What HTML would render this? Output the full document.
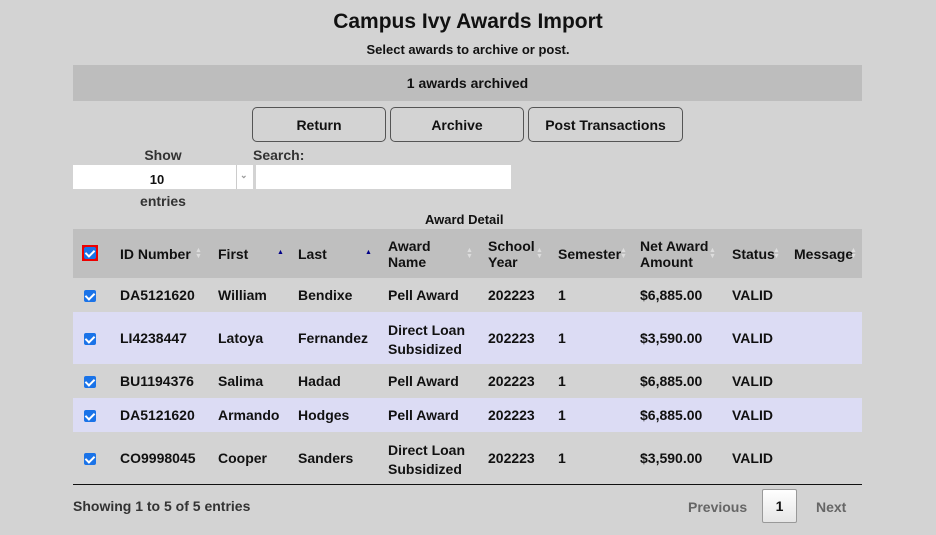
<!DOCTYPE html>
<html><head><style>
body{margin:0;width:936px;height:535px;background:#d3d3d3;font-family:"Liberation Sans",sans-serif;font-weight:bold;color:#111;position:relative;overflow:hidden}
.a{position:absolute;white-space:nowrap}
.btn{position:absolute;top:107px;height:35px;border:1px solid #555;border-radius:5px;background:#d3d3d3;font-size:14px;display:flex;align-items:center;justify-content:center;box-sizing:border-box}
.row{position:absolute;left:73px;width:789px}
.t{font-size:14px}
.cb{position:absolute;left:84px;width:12px;height:12px;background:#1a73e8;border-radius:2px}
.cb:after{content:"";position:absolute;left:3px;top:1px;width:4px;height:7px;border:solid #fff;border-width:0 2px 2px 0;transform:rotate(45deg)}
.s{position:absolute;font-size:7px;color:#ddd;line-height:6px}
</style></head><body>
<div class="a" style="left:0;width:936px;text-align:center;top:10px;font-size:21px">Campus Ivy Awards Import</div>
<div class="a" style="left:0;width:936px;text-align:center;top:42px;font-size:13px">Select awards to archive or post.</div>
<div class="a" style="left:73px;width:789px;top:65px;height:36px;background:#bdbdbd;text-align:center;line-height:36px;font-size:14px">1 awards archived</div>
<div class="btn" style="left:252px;width:134px">Return</div>
<div class="btn" style="left:390px;width:134px">Archive</div>
<div class="btn" style="left:528px;width:155px">Post Transactions</div>
<div class="a t" style="left:73px;width:180px;text-align:center;top:147px;color:#333">Show</div>
<div class="a" style="left:73px;top:165px;width:180px;height:24px;background:#fff"></div>
<div class="a" style="left:236px;top:165px;width:1px;height:24px;background:#ccc"></div>
<div class="a" style="left:240px;top:170px;font-size:9px;color:#999">⌄</div>
<div class="a" style="left:73px;width:168px;text-align:center;top:172px;font-size:13px">10</div>
<div class="a t" style="left:73px;width:180px;text-align:center;top:193px;color:#333">entries</div>
<div class="a t" style="left:253px;top:147px;color:#333">Search:</div>
<div class="a" style="left:256px;top:165px;width:255px;height:24px;background:#fff"></div>
<div class="a" style="left:425px;top:212px;font-size:13px">Award Detail</div>
<div class="row" style="top:229px;height:49px;background:#bfbfbf"></div>
<div class="a" style="left:82px;top:245px;width:16px;height:16px;background:#e00;"></div>
<div class="cb" style="top:247px;left:84px"></div>
<div class="a t" style="left:120px;top:246px">ID Number</div>
<div class="a t" style="left:218px;top:246px">First</div>
<div class="a t" style="left:298px;top:246px">Last</div>
<div class="a t" style="left:388px;top:238px;line-height:16px">Award<br>Name</div>
<div class="a t" style="left:488px;top:238px;line-height:16px">School<br>Year</div>
<div class="a t" style="left:558px;top:246px">Semester</div>
<div class="a t" style="left:640px;top:238px;line-height:16px">Net Award<br>Amount</div>
<div class="a t" style="left:732px;top:246px">Status</div>
<div class="a t" style="left:794px;top:246px">Message</div>
<div class="a" style="left:277px;top:249px;font-size:7px;color:#008">▲</div>
<div class="a" style="left:365px;top:249px;font-size:7px;color:#008">▲</div>
<div class="s" style="left:195px;top:248px">▲<br>▼</div>
<div class="s" style="left:466px;top:248px">▲<br>▼</div>
<div class="s" style="left:536px;top:248px">▲<br>▼</div>
<div class="s" style="left:620px;top:248px">▲<br>▼</div>
<div class="s" style="left:709px;top:248px">▲<br>▼</div>
<div class="s" style="left:773px;top:248px">▲<br>▼</div>
<div class="s" style="left:850px;top:248px">▲<br>▼</div>

<div class="row" style="top:312px;height:52px;background:#dcdcf4"></div>
<div class="row" style="top:398px;height:34px;background:#dcdcf4"></div>

<div class="cb" style="top:290px"></div>
<div class="a t" style="left:120px;top:287px">DA5121620</div><div class="a t" style="left:218px;top:287px">William</div><div class="a t" style="left:298px;top:287px">Bendixe</div><div class="a t" style="left:388px;top:287px">Pell Award</div><div class="a t" style="left:488px;top:287px">202223</div><div class="a t" style="left:558px;top:287px">1</div><div class="a t" style="left:640px;top:287px">$6,885.00</div><div class="a t" style="left:732px;top:287px">VALID</div>

<div class="cb" style="top:333px"></div>
<div class="a t" style="left:120px;top:330px">LI4238447</div><div class="a t" style="left:218px;top:330px">Latoya</div><div class="a t" style="left:298px;top:330px">Fernandez</div><div class="a t" style="left:388px;top:321px;line-height:19px">Direct Loan<br>Subsidized</div><div class="a t" style="left:488px;top:330px">202223</div><div class="a t" style="left:558px;top:330px">1</div><div class="a t" style="left:640px;top:330px">$3,590.00</div><div class="a t" style="left:732px;top:330px">VALID</div>

<div class="cb" style="top:376px"></div>
<div class="a t" style="left:120px;top:373px">BU1194376</div><div class="a t" style="left:218px;top:373px">Salima</div><div class="a t" style="left:298px;top:373px">Hadad</div><div class="a t" style="left:388px;top:373px">Pell Award</div><div class="a t" style="left:488px;top:373px">202223</div><div class="a t" style="left:558px;top:373px">1</div><div class="a t" style="left:640px;top:373px">$6,885.00</div><div class="a t" style="left:732px;top:373px">VALID</div>

<div class="cb" style="top:410px"></div>
<div class="a t" style="left:120px;top:407px">DA5121620</div><div class="a t" style="left:218px;top:407px">Armando</div><div class="a t" style="left:298px;top:407px">Hodges</div><div class="a t" style="left:388px;top:407px">Pell Award</div><div class="a t" style="left:488px;top:407px">202223</div><div class="a t" style="left:558px;top:407px">1</div><div class="a t" style="left:640px;top:407px">$6,885.00</div><div class="a t" style="left:732px;top:407px">VALID</div>

<div class="cb" style="top:453px"></div>
<div class="a t" style="left:120px;top:450px">CO9998045</div><div class="a t" style="left:218px;top:450px">Cooper</div><div class="a t" style="left:298px;top:450px">Sanders</div><div class="a t" style="left:388px;top:441px;line-height:19px">Direct Loan<br>Subsidized</div><div class="a t" style="left:488px;top:450px">202223</div><div class="a t" style="left:558px;top:450px">1</div><div class="a t" style="left:640px;top:450px">$3,590.00</div><div class="a t" style="left:732px;top:450px">VALID</div>

<div class="row" style="top:484px;height:1px;background:#111"></div>
<div class="a t" style="left:73px;top:498px;color:#333">Showing 1 to 5 of 5 entries</div>
<div class="a t" style="left:688px;top:499px;color:#666">Previous</div>
<div class="a" style="left:762px;top:489px;width:35px;height:34px;border:1px solid #999;border-radius:2px;background:linear-gradient(#fff,#e6e6e6);box-sizing:border-box;text-align:center;line-height:32px;font-size:14px">1</div>
<div class="a t" style="left:816px;top:499px;color:#666">Next</div>
</body></html>
